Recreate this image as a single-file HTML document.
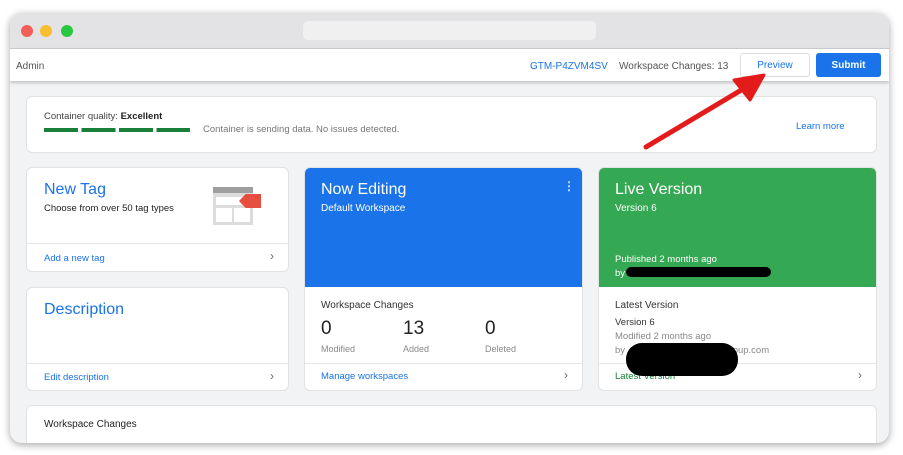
<!DOCTYPE html><html><head><style>
*{margin:0;padding:0;box-sizing:border-box}
body{width:903px;height:455px;background:#fff;font-family:"Liberation Sans",sans-serif;position:relative;overflow:hidden}
.win{position:absolute;left:10px;top:13px;width:879px;height:430px;border-radius:12px;overflow:hidden;background:#f1f3f4;box-shadow:0 2px 8px rgba(0,0,0,.35)}
.tb{position:absolute;left:0;top:0;width:100%;height:35px;background:#e3e3e5}
.dot{position:absolute;top:12px;width:12px;height:12px;border-radius:50%}
.url{position:absolute;left:293px;top:8px;width:293px;height:19px;background:#f0f0f1;border-radius:5px}
.hdr{position:absolute;left:0;top:35px;width:100%;height:33px;background:#fff;border-top:1px solid #c8c8cc;box-shadow:0 2px 3px rgba(0,0,0,.2);font-size:10px;color:#555}
.card{position:absolute;background:#fff;border-radius:5px;box-shadow:0 0 0 1px #e2e2e2}
.a{position:absolute;font-size:10px}
.blue{color:#1a73e8}
.line{position:absolute;left:0;right:0;height:1px;background:#e6e6e6}
.chev{position:absolute;right:14px;font-size:12px;color:#666}
</style></head><body>
<div class="win">
<div class="tb"><div class="dot" style="left:11px;background:#f25f57"></div><div class="dot" style="left:30px;background:#f9bd2e"></div><div class="dot" style="left:51px;background:#28c840"></div><div class="url"></div></div>
<div class="hdr">
<div class="a" style="left:6px;top:12px">Admin</div>
<div class="a blue" style="left:520px;top:12px">GTM-P4ZVM4SV</div>
<div class="a" style="left:609px;top:12px">Workspace Changes: 13</div>
<div style="position:absolute;left:730px;top:4px;width:70px;height:24px;border:1px solid #ddd;border-radius:3px;color:#1a73e8;font-size:10px;text-align:center;line-height:24px">Preview</div>
<div style="position:absolute;left:806px;top:4px;width:65px;height:24px;background:#1a73e8;border-radius:3px;color:#fff;font-size:10px;font-weight:bold;text-align:center;line-height:25px">Submit</div>
</div>
<div class="card" style="left:17px;top:84px;width:849px;height:55px">
<div class="a" style="left:17px;top:14px;color:#444;font-size:9.5px">Container quality: <span style="color:#222;font-weight:bold">Excellent</span></div>
<div style="position:absolute;left:17px;top:31px;width:146px;height:4px;background:repeating-linear-gradient(90deg,#188038 0 34px,transparent 34px 37.5px)"></div>
<div class="a" style="left:176px;top:27px;color:#777;font-size:9.5px">Container is sending data. No issues detected.</div>
<div class="a blue" style="left:769px;top:24px;font-size:9.5px">Learn more</div>
</div>
<div class="card" style="left:17px;top:155px;width:261px;height:103px">
<div class="a blue" style="left:17px;top:13px;font-size:16px">New Tag</div>
<div class="a" style="left:17px;top:35px;font-size:9.5px;color:#222">Choose from over 50 tag types</div>
<div style="position:absolute;left:186px;top:19px;width:40px;height:38px;background:#dcdcdc"><div style="position:absolute;left:0;top:0;width:40px;height:6px;background:#9e9e9e"></div><div style="position:absolute;left:3px;top:10px;width:34px;height:8px;background:#fff"></div><div style="position:absolute;left:3px;top:21px;width:16px;height:14px;background:#fff"></div><div style="position:absolute;left:21px;top:21px;width:16px;height:14px;background:#fff"></div></div>
<div style="position:absolute;left:212px;top:26px;width:22px;height:14px;background:#e84e40;clip-path:polygon(30% 0,100% 0,100% 100%,30% 100%,0 50%)"></div>
<div class="line" style="top:75px"></div>
<div class="a blue" style="left:17px;top:85px;font-size:9.5px">Add a new tag</div><div class="chev" style="top:81px">›</div>
</div>
<div class="card" style="left:17px;top:275px;width:261px;height:102px">
<div class="a blue" style="left:17px;top:13px;font-size:16px">Description</div>
<div class="line" style="top:75px"></div>
<div class="a blue" style="left:17px;top:84px;font-size:9.5px">Edit description</div><div class="chev" style="top:81px">›</div>
</div>
<div class="card" style="left:295px;top:155px;width:277px;height:222px;overflow:hidden">
<div style="position:absolute;left:0;top:0;width:100%;height:119px;background:#1a73e8"></div>
<div class="a" style="left:16px;top:13px;font-size:16px;color:#fff">Now Editing</div>
<div class="a" style="left:16px;top:35px;color:#fff">Default Workspace</div>
<div class="a" style="left:258px;top:11px;color:#cfe0fb;font-size:12px;font-weight:bold">⋮</div>
<div class="a" style="left:16px;top:132px;color:#333">Workspace Changes</div>
<div class="a" style="left:16px;top:150px;font-size:19px;color:#222">0</div><div class="a" style="left:16px;top:176px;font-size:9px;color:#888">Modified</div>
<div class="a" style="left:98px;top:150px;font-size:19px;color:#222">13</div><div class="a" style="left:98px;top:176px;font-size:9px;color:#888">Added</div>
<div class="a" style="left:180px;top:150px;font-size:19px;color:#222">0</div><div class="a" style="left:180px;top:176px;font-size:9px;color:#888">Deleted</div>
<div class="line" style="top:195px"></div>
<div class="a blue" style="left:16px;top:203px;font-size:9.5px">Manage workspaces</div><div class="chev" style="top:200px">›</div>
</div>
<div class="card" style="left:589px;top:155px;width:277px;height:222px;overflow:hidden">
<div style="position:absolute;left:0;top:0;width:100%;height:119px;background:#34a853"></div>
<div class="a" style="left:16px;top:13px;font-size:16px;color:#fff">Live Version</div>
<div class="a" style="left:16px;top:35px;color:#fff">Version 6</div>
<div class="a" style="left:16px;top:86px;color:#fff;font-size:9.5px">Published 2 months ago</div>
<div class="a" style="left:16px;top:100px;color:#fff;font-size:9.5px">by</div>
<div style="position:absolute;left:27px;top:99px;width:145px;height:10px;background:#000;border-radius:5px"></div>
<div class="a" style="left:16px;top:132px;color:#333">Latest Version</div>
<div class="a" style="left:16px;top:149px;color:#333;font-size:9.5px">Version 6</div>
<div class="a" style="left:16px;top:163px;color:#888;font-size:9.5px">Modified 2 months ago</div>
<div class="a" style="left:16px;top:177px;color:#888;font-size:9.5px">by <span style="margin-left:105px">oup.com</span></div>
<div class="line" style="top:195px"></div>
<div class="a" style="left:16px;top:203px;font-size:9.5px;color:#188038">Latest Version</div><div class="chev" style="top:200px">›</div>
<div style="position:absolute;left:27px;top:175px;width:112px;height:33px;background:#000;border-radius:16px"></div>
</div>
<div class="card" style="left:17px;top:393px;width:849px;height:50px">
<div class="a" style="left:17px;top:13px;color:#222">Workspace Changes</div>
</div>
</div>
<svg style="position:absolute;left:0;top:0" width="903" height="455"><line x1="646" y1="147" x2="748" y2="86" stroke="#e31b1b" stroke-width="5" stroke-linecap="round"/><polygon points="764,75 734,80 750,100" fill="#e31b1b" stroke="#e31b1b" stroke-width="3" stroke-linejoin="round"/></svg>
</body></html>
